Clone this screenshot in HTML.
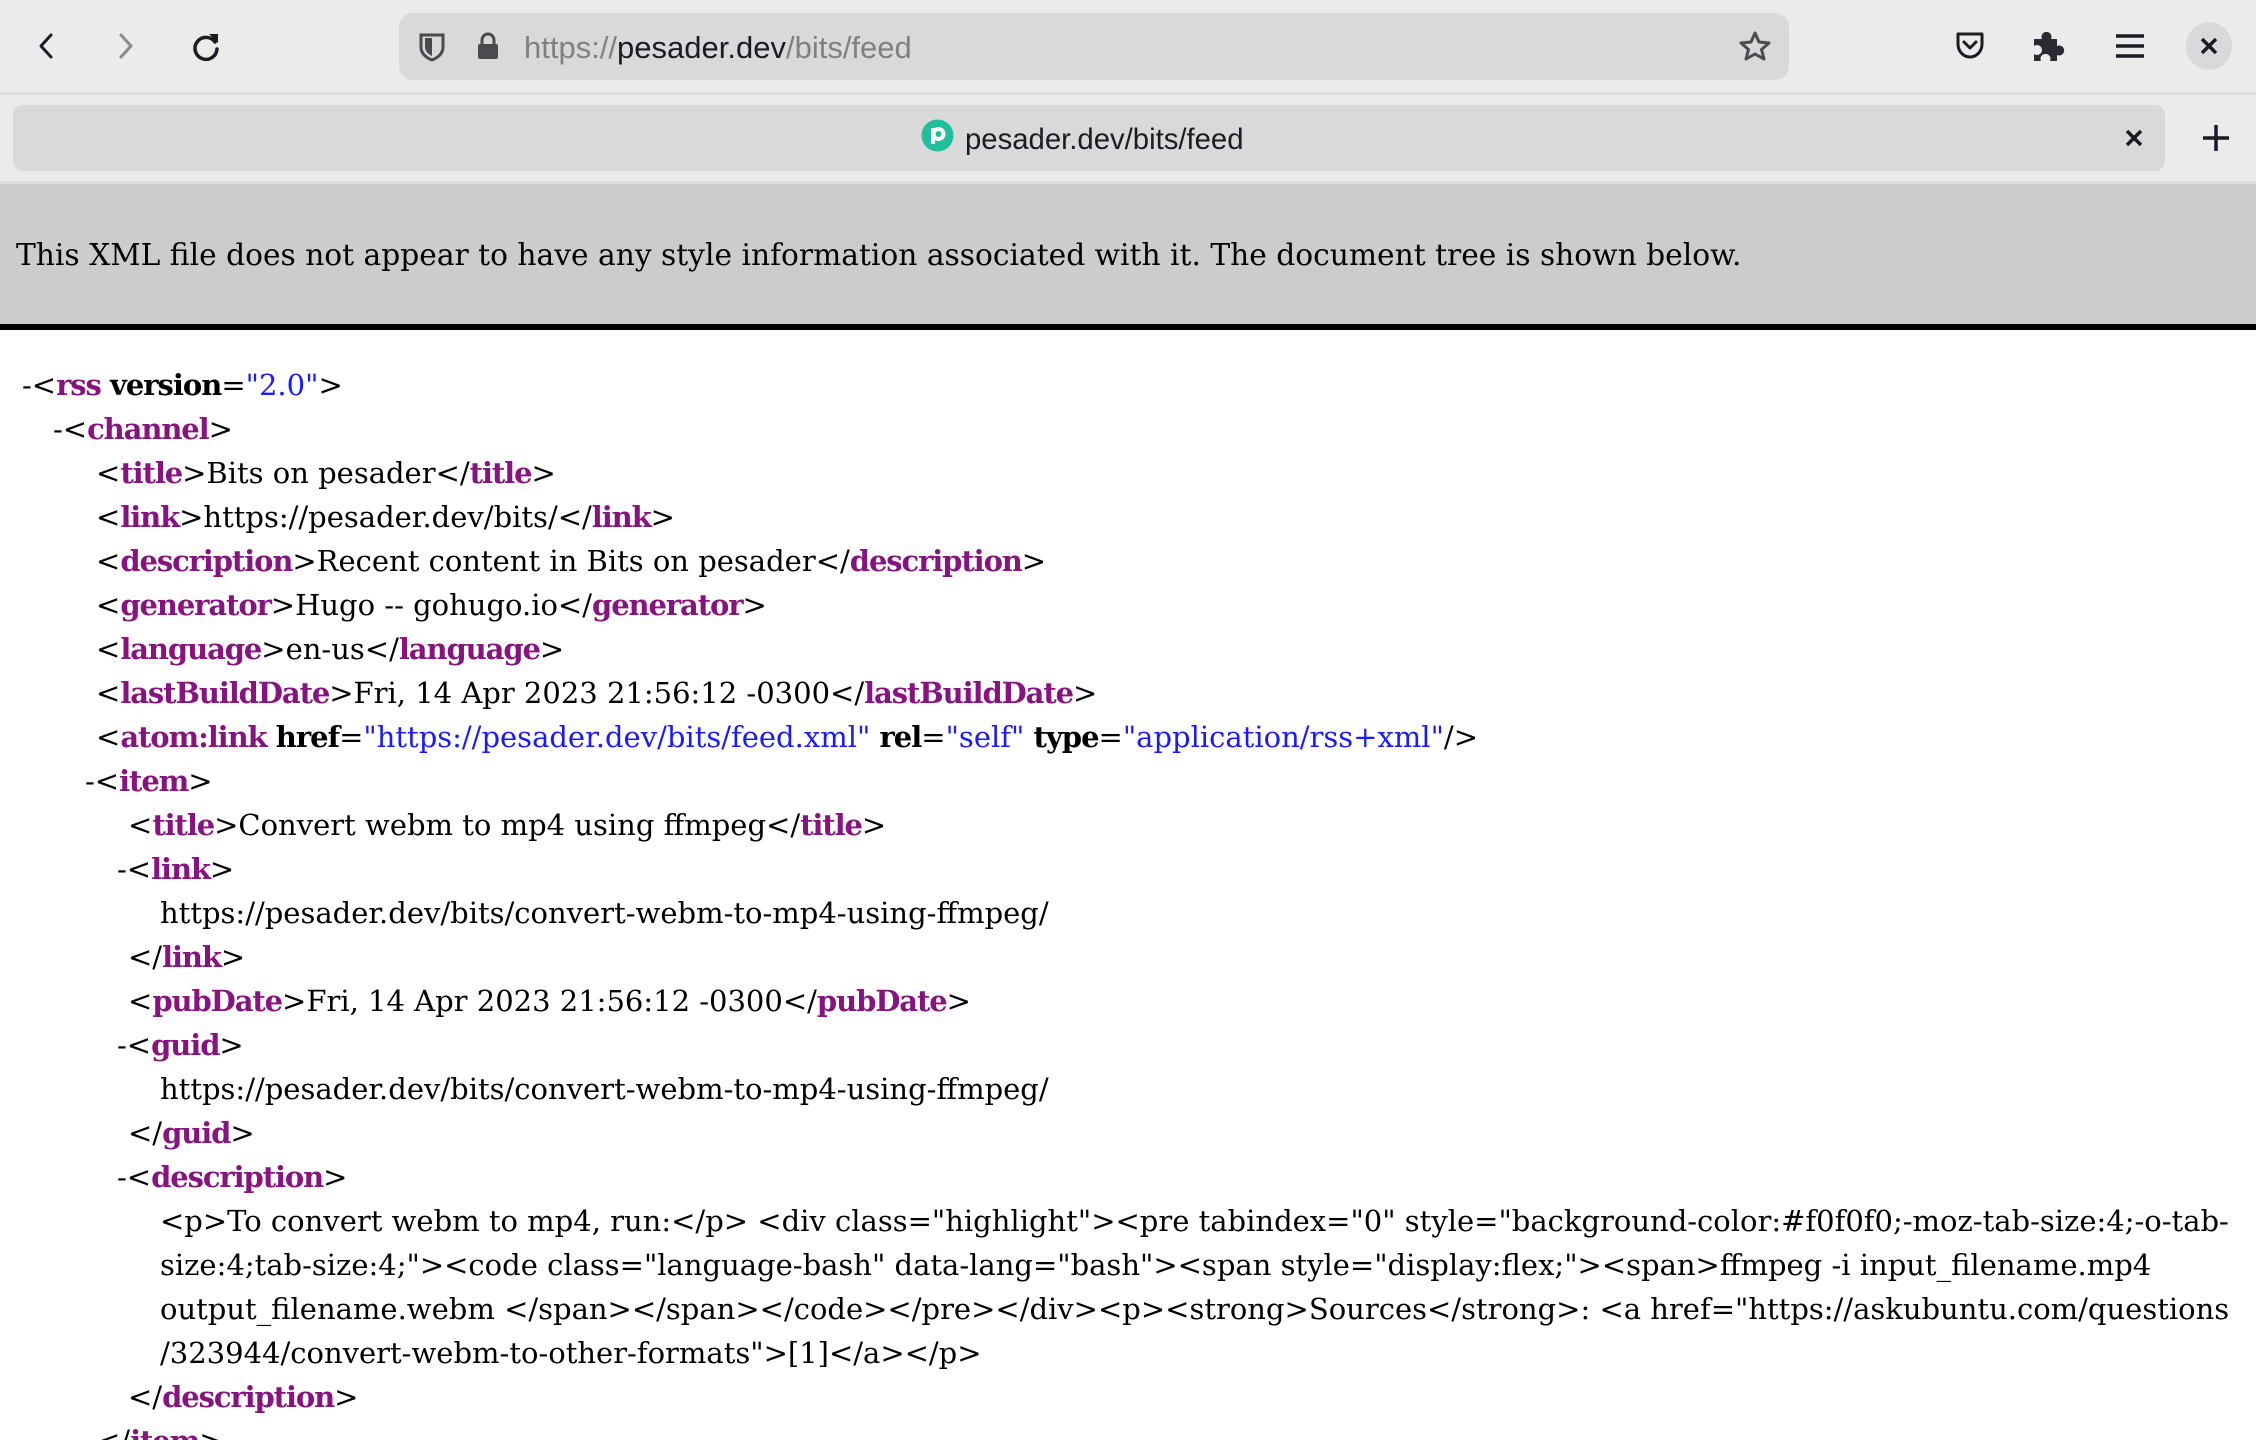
<!DOCTYPE html>
<html><head><meta charset="utf-8"><style>
*{margin:0;padding:0;box-sizing:border-box}
html,body{width:2256px;height:1440px;overflow:hidden;background:#fff}
body{position:relative;font-family:"DejaVu Serif","Liberation Serif",serif}
.tb{position:absolute;left:0;top:0;width:2256px;height:92px;background:#ebebeb}
.sep1{position:absolute;left:0;top:92px;width:2256px;height:3px;background:#dcdcdc}
.tabs{position:absolute;left:0;top:95px;width:2256px;height:88px;background:#ebebeb}
.sep2{position:absolute;left:0;top:181px;width:2256px;height:3px;background:#dcdcdc}
.url{position:absolute;left:399px;top:13px;width:1390px;height:67px;background:#d9d9d9;border-radius:14px}
.urltext{position:absolute;left:524px;top:30px;font:31px "Liberation Sans",sans-serif;color:#808080;white-space:nowrap}
.urltext b{font-weight:normal;color:#1c1b22}
.tab{position:absolute;left:13px;top:105px;width:2152px;height:66px;background:#d9d9d9;border-radius:10px}
.tabtext{position:absolute;left:965px;top:123px;font:29.3px "Liberation Sans",sans-serif;color:#1c1b22;white-space:nowrap}
.hdr{position:absolute;left:0;top:184px;width:2256px;border-bottom:6px solid #000;height:146px;background:#cccccc}
.hdr p{position:absolute;left:16px;top:54px;font-size:29.7px;color:#000;white-space:nowrap}
.x{position:absolute;left:0;top:363px;font-size:29px;line-height:44px;color:#000;white-space:nowrap}
.l{display:block;height:44px}
.t{color:#881280;font-weight:bold;letter-spacing:-1.1px}
.a{font-weight:bold;letter-spacing:-1px}
.v{color:#1a1aff}
svg{position:absolute}
</style></head><body>
<div class="tb"></div><div class="sep1"></div><div class="tabs"></div><div class="sep2"></div>
<svg style="left:33px;top:32px" width="28" height="28" viewBox="0 0 28 28"><path d="M18 3 L8 14 L18 25" fill="none" stroke="#1c1b22" stroke-width="3" stroke-linecap="round" stroke-linejoin="round"/></svg>
<svg style="left:111px;top:32px" width="28" height="28" viewBox="0 0 28 28"><path d="M10 3 L20 14 L10 25" fill="none" stroke="#8a8a8d" stroke-width="3" stroke-linecap="round" stroke-linejoin="round"/></svg>
<svg style="left:190px;top:30px" width="32" height="32" viewBox="0 0 32 32"><path d="M25 12 A11 11 0 1 0 27 19" fill="none" stroke="#1c1b22" stroke-width="3.5" stroke-linecap="round"/><path d="M19 4 L28 4 L28 13 Z" fill="#1c1b22"/></svg>
<div class="url"></div>
<svg style="left:419px;top:32px" width="26" height="30" viewBox="0 0 26 30"><path d="M2 3 H24 V15 C24 22 18 26 13 28 C8 26 2 22 2 15 Z" fill="none" stroke="#4a4a4f" stroke-width="3"/><path d="M13 6 V24 C9 22 6 19 6 15 V6 Z" fill="#4a4a4f"/></svg>
<svg style="left:474px;top:31px" width="28" height="30" viewBox="0 0 28 30"><path d="M8 13 V9 A6 6 0 0 1 20 9 V13" fill="none" stroke="#4a4a4f" stroke-width="3"/><rect x="4" y="13" width="20" height="15" rx="2" fill="#4a4a4f"/></svg>
<div class="urltext">https://<b>pesader.dev</b>/bits/feed</div>
<svg style="left:1738px;top:30px" width="34" height="32" viewBox="0 0 34 32"><path d="M17 3 L21 12 L31 13 L23.5 19.5 L26 29 L17 24 L8 29 L10.5 19.5 L3 13 L13 12 Z" fill="none" stroke="#4a4a4f" stroke-width="3" stroke-linejoin="round"/></svg>
<svg style="left:1954px;top:31px" width="32" height="30" viewBox="0 0 32 30"><path d="M4 3 H28 V13 A12 13 0 0 1 4 13 Z" fill="none" stroke="#1c1b22" stroke-width="3" stroke-linejoin="round"/><path d="M10 11 L16 17 L22 11" fill="none" stroke="#1c1b22" stroke-width="3" stroke-linecap="round" stroke-linejoin="round"/></svg>
<svg style="left:2032px;top:29px" width="34" height="36" viewBox="0 0 34 36"><path d="M2 10 H10 A5 5 0 1 1 19 10 H25 V17 A5 5 0 1 1 25 26 V32 H18 A5 5 0 1 0 9 32 H2 V25 A5 5 0 1 0 2 17 Z" fill="#2b2a33"/></svg>
<svg style="left:2113px;top:33px" width="34" height="26" viewBox="0 0 34 26"><path d="M3 3 H31 M3 13 H31 M3 23 H31" stroke="#1c1b22" stroke-width="3.5"/></svg>
<div style="position:absolute;left:2186px;top:22px;width:46px;height:48px;border-radius:50%;background:#d9d9d9"></div>
<svg style="left:2199px;top:36px" width="20" height="20" viewBox="0 0 20 20"><path d="M3 3 L17 17 M17 3 L3 17" stroke="#1c1b22" stroke-width="3.5"/></svg>
<div class="tab"></div>
<svg style="left:921px;top:119px" width="33" height="33" viewBox="0 0 33 33"><circle cx="16.5" cy="16.5" r="16" fill="#1fbf9c"/><path d="M12 9 V25" stroke="#fff" stroke-width="4"/><circle cx="17.5" cy="15" r="5" fill="none" stroke="#fff" stroke-width="4"/></svg>
<div class="tabtext">pesader.dev/bits/feed</div>
<svg style="left:2124px;top:128px" width="20" height="20" viewBox="0 0 20 20"><path d="M3 3 L17 17 M17 3 L3 17" stroke="#1c1b22" stroke-width="3.5"/></svg>
<svg style="left:2202px;top:124px" width="28" height="28" viewBox="0 0 28 28"><path d="M14 1 V27 M1 14 H27" stroke="#1c1b22" stroke-width="3.5"/></svg>
<div class="hdr"><p>This XML file does not appear to have any style information associated with it. The document tree is shown below.</p></div>
<div class="x">
<span class="l" style="padding-left:22px">-&lt;<span class="t">rss</span> <span class="a">version</span>=<span class="v">"2.0"</span>&gt;</span>
<span class="l" style="padding-left:53px">-&lt;<span class="t">channel</span>&gt;</span>
<span class="l" style="padding-left:96px">&lt;<span class="t">title</span>&gt;Bits on pesader&lt;/<span class="t">title</span>&gt;</span>
<span class="l" style="padding-left:96px">&lt;<span class="t">link</span>&gt;https://pesader.dev/bits/&lt;/<span class="t">link</span>&gt;</span>
<span class="l" style="padding-left:96px">&lt;<span class="t">description</span>&gt;Recent content in Bits on pesader&lt;/<span class="t">description</span>&gt;</span>
<span class="l" style="padding-left:96px">&lt;<span class="t">generator</span>&gt;Hugo -- gohugo.io&lt;/<span class="t">generator</span>&gt;</span>
<span class="l" style="padding-left:96px">&lt;<span class="t">language</span>&gt;en-us&lt;/<span class="t">language</span>&gt;</span>
<span class="l" style="padding-left:96px">&lt;<span class="t">lastBuildDate</span>&gt;Fri, 14 Apr 2023 21:56:12 -0300&lt;/<span class="t">lastBuildDate</span>&gt;</span>
<span class="l" style="padding-left:96px">&lt;<span class="t">atom:link</span> <span class="a">href</span>=<span class="v">"https://pesader.dev/bits/feed.xml"</span> <span class="a">rel</span>=<span class="v">"self"</span> <span class="a">type</span>=<span class="v">"application/rss+xml"</span>/&gt;</span>
<span class="l" style="padding-left:85px">-&lt;<span class="t">item</span>&gt;</span>
<span class="l" style="padding-left:128px">&lt;<span class="t">title</span>&gt;Convert webm to mp4 using ffmpeg&lt;/<span class="t">title</span>&gt;</span>
<span class="l" style="padding-left:117px">-&lt;<span class="t">link</span>&gt;</span>
<span class="l" style="padding-left:160px">https://pesader.dev/bits/convert-webm-to-mp4-using-ffmpeg/</span>
<span class="l" style="padding-left:128px">&lt;/<span class="t">link</span>&gt;</span>
<span class="l" style="padding-left:128px">&lt;<span class="t">pubDate</span>&gt;Fri, 14 Apr 2023 21:56:12 -0300&lt;/<span class="t">pubDate</span>&gt;</span>
<span class="l" style="padding-left:117px">-&lt;<span class="t">guid</span>&gt;</span>
<span class="l" style="padding-left:160px">https://pesader.dev/bits/convert-webm-to-mp4-using-ffmpeg/</span>
<span class="l" style="padding-left:128px">&lt;/<span class="t">guid</span>&gt;</span>
<span class="l" style="padding-left:117px">-&lt;<span class="t">description</span>&gt;</span>
<span class="l" style="padding-left:160px">&lt;p&gt;To convert webm to mp4, run:&lt;/p&gt; &lt;div class="highlight"&gt;&lt;pre tabindex="0" style="background-color:#f0f0f0;-moz-tab-size:4;-o-tab-</span>
<span class="l" style="padding-left:160px">size:4;tab-size:4;"&gt;&lt;code class="language-bash" data-lang="bash"&gt;&lt;span style="display:flex;"&gt;&lt;span&gt;ffmpeg -i input_filename.mp4</span>
<span class="l" style="padding-left:160px">output_filename.webm &lt;/span&gt;&lt;/span&gt;&lt;/code&gt;&lt;/pre&gt;&lt;/div&gt;&lt;p&gt;&lt;strong&gt;Sources&lt;/strong&gt;: &lt;a href="https://askubuntu.com/questions</span>
<span class="l" style="padding-left:160px">/323944/convert-webm-to-other-formats"&gt;[1]&lt;/a&gt;&lt;/p&gt;</span>
<span class="l" style="padding-left:128px">&lt;/<span class="t">description</span>&gt;</span>
<span class="l" style="padding-left:96px">&lt;/<span class="t">item</span>&gt;</span>
</div>
</body></html>
